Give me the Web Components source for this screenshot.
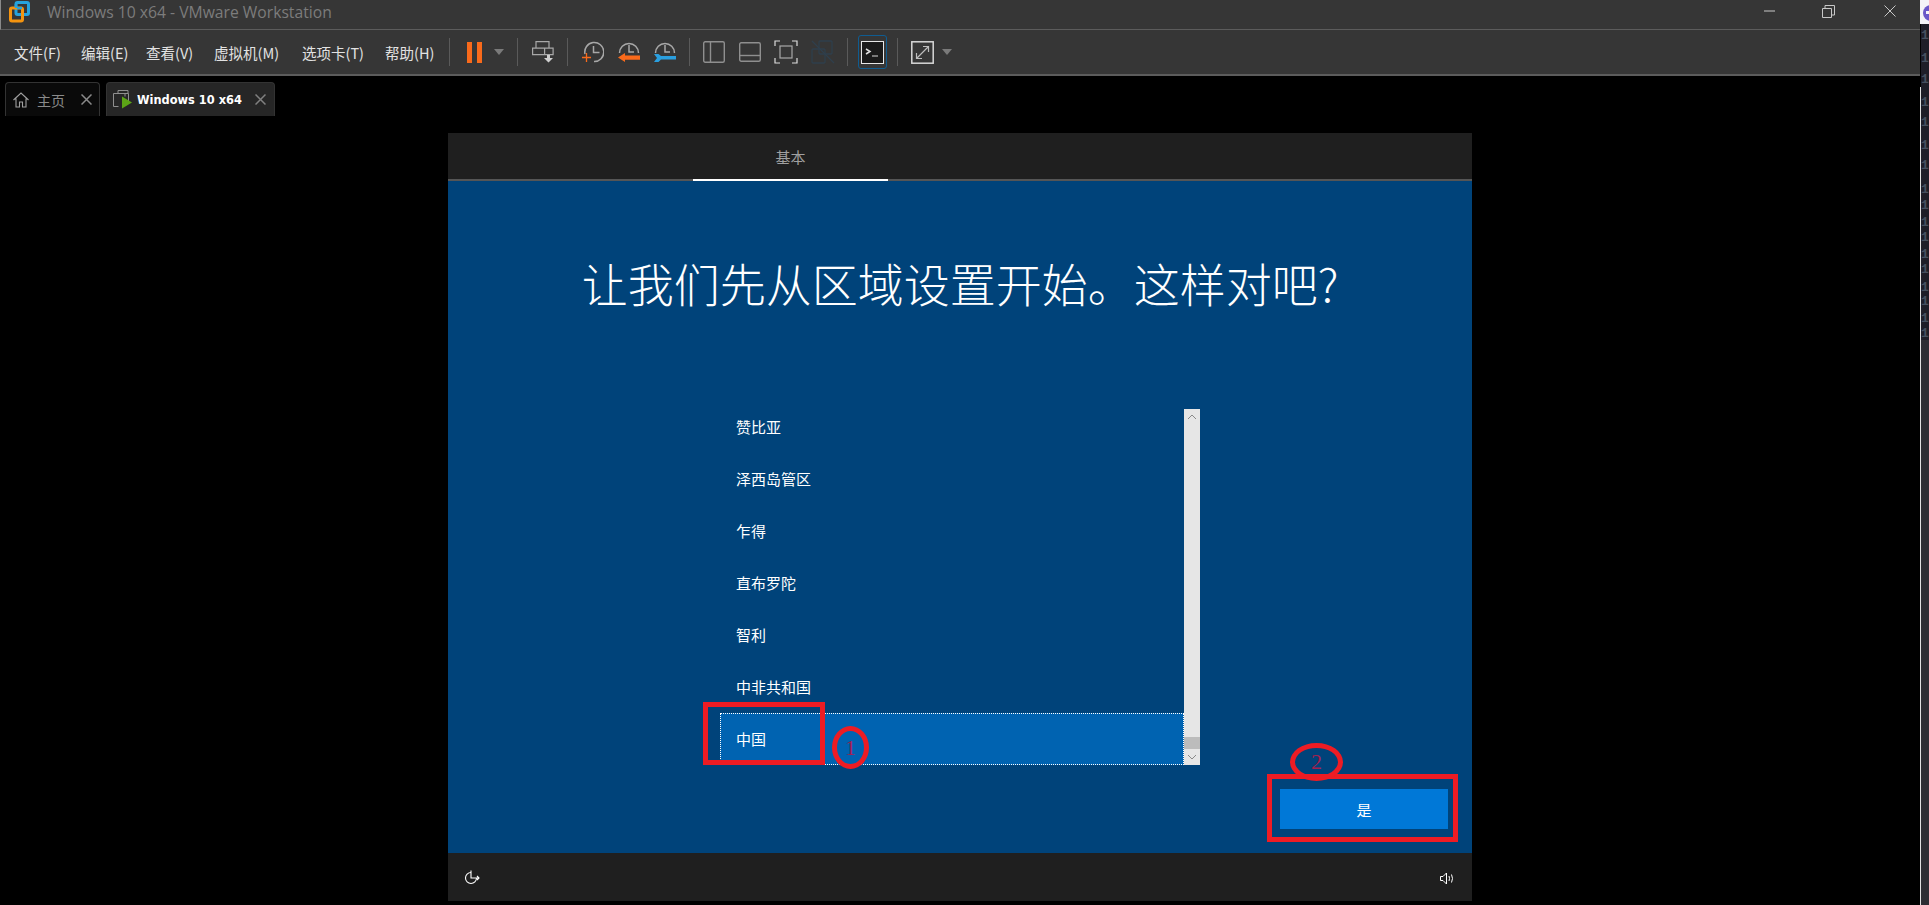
<!DOCTYPE html>
<html lang="zh"><head><meta charset="utf-8"><style>
html,body{margin:0;height:905px;overflow:hidden;background:#000}
body{display:flex;font-family:"Noto Sans CJK SC","Noto Sans",sans-serif}
vmw-app{flex:0 0 1920px}
side-strip{flex:0 0 9px}
</style></head><body>
<vmw-app></vmw-app><side-strip></side-strip>
<script>
const I={
pause:'<svg width="16" height="21" viewBox="0 0 16 21"><path fill="#f96a1b" d="M0 0h5v21H0zM10 0h5v21h-5z"/></svg>',
arrow:'<svg width="10" height="6" viewBox="0 0 10 6"><path fill="#7a7a7a" d="M0 0h10L5 6z"/></svg>',
send:'<svg width="22" height="24" viewBox="0 0 22 24" fill="none" stroke="#a8a8a8" stroke-width="1.2"><path d="M4 1.600h13v6.500H4zM.6 8.100h12v6.500H.6zM12.600 8.100h8.500v6.500h-8.500z"/><path fill="#cfcfcf" stroke="none" d="M15 15h3v3h3l-4.500 4.500-4.500-4.500h3z"/></svg>',
clock1:'<svg width="22" height="22" viewBox="0 0 22 22" fill="none"><path stroke="#a8a8a8" stroke-width="1.500" d="M3 13A9.500 9.500 0 1 1 12 20.500M11.500 5v6.500h6"/><path stroke="#f96a1b" stroke-width="1.300" d="M0 16.500h9M4.500 12v9"/></svg>',
clock2:'<svg width="22" height="22" viewBox="0 0 22 22" fill="none"><path stroke="#a8a8a8" stroke-width="1.500" d="M1.500 12A9.500 9.500 0 0 1 20.500 12M11 4v7h5"/><path fill="#f96a1b" d="M0 16.500L7 12v2.500h15v4.200H7V21z"/></svg>',
clock3:'<svg width="22" height="22" viewBox="0 0 22 22" fill="none"><path stroke="#a8a8a8" stroke-width="1.500" d="M1.500 12A9.500 9.500 0 0 1 20.500 12M11 4v7h5"/><path fill="#2a9fdf" d="M0 13h4.500l2.500 2h15v3.500H7l-2.500 2.500H0l3-4z"/></svg>',
left:'<svg width="22" height="22" viewBox="0 0 22 22" fill="none" stroke="#8f8f8f" stroke-width="1.400"><rect x=".7" y=".7" width="20.600" height="20.600" rx="1.500"/><path d="M7.500 1v20"/></svg>',
bottom:'<svg width="22" height="20" viewBox="0 0 22 20" fill="none" stroke="#8f8f8f" stroke-width="1.400"><rect x=".7" y=".7" width="20.600" height="18.600" rx="1.500"/><path d="M1 13.500h20"/></svg>',
full:'<svg width="24" height="24" viewBox="0 0 24 24" fill="none" stroke="#dcdcdc" stroke-width="1.200"><path d="M1 6V1h5M18 1h5v5M23 18v5h-5M6 23H1v-5"/><rect x="6" y="6" width="12" height="12" stroke="#a8a8a8"/></svg>',
unity:'<svg width="24" height="24" viewBox="0 0 24 24" fill="none" stroke="#2f3f4c" stroke-width="1.300"><rect x="8" y="1" width="13" height="13" rx="1"/><rect x="1" y="9" width="13" height="14" rx="1"/><path d="M1 1l22 22"/></svg>',
term:'<svg width="23" height="23" viewBox="0 0 23 23"><rect x=".5" y=".5" width="22" height="22" fill="#1a1a1a" stroke="#e6e6e6"/><path fill="none" stroke="#e0e0e0" stroke-width="1.500" d="M5 8l4 2.500L5 13"/><path stroke="#bbb" stroke-width="1.200" d="M11 15h6"/></svg>',
expand:'<svg width="23" height="23" viewBox="0 0 23 23" fill="none"><rect x=".8" y=".8" width="21.400" height="21.400" stroke="#d8d8d8" stroke-width="1.500"/><path stroke="#bdbdbd" stroke-width="1.200" d="M6 17L17 6M12 5.500h5.500V11M5.500 12v5.500H11"/></svg>',
home:'<svg width="16" height="16" viewBox="0 0 16 16" fill="none" stroke="#a0a0a0" stroke-width="1.100"><path d="M.5 8L8 1l7.500 7M3 6.500V15h3.500v-5h3v5H13V6.500"/></svg>',
vmtab:'<svg width="20" height="19" viewBox="0 0 20 19" fill="none" stroke="#8f8f8f" stroke-width="1"><path d="M5 3.500V.5h10v3M12 3.500h3.500V14M.5 3.500h11.500v3M.5 3.500v13h5"/><path fill="#5ca516" stroke="none" d="M9 6.500l10 6-10 6z"/></svg>',
x:c=>`<svg width="11" height="11" viewBox="0 0 11 11"><path stroke="${c}" stroke-width="1.500" d="M.5.500l10 10M10.500.500l-10 10"/></svg>`,
logo:'<svg width="21" height="22" viewBox="0 0 21 22" fill="none" stroke-width="3"><rect x="7" y="1.500" width="12.500" height="12" rx="1.500" stroke="#26a3dd"/><rect x="1.500" y="7" width="12" height="13" rx="1.500" stroke="#f5940f"/><path stroke="#26a3dd" stroke-width="2.500" d="M7 7v-4M8 7h5"/></svg>',
power:'<svg width="16" height="16" viewBox="0 0 16 16" fill="none" stroke="#fff" stroke-width="1.100"><path d="M7 2.500A5.500 5.500 0 1 0 12.500 8"/><path d="M7 .5V8h8M13 6l2 2-2 2"/></svg>',
sound:'<svg width="15" height="13" viewBox="0 0 15 13" fill="none" stroke="#fff" stroke-width="1"><path d="M.5 4.500h2.500L6.500 1v11L3 8.500H.5z"/><path d="M9 4q1 2.500 0 5M11.500 2.500q2 4 0 8"/></svg>'
};
function def(name,html,init){customElements.define(name,class extends HTMLElement{constructor(){super();const s=this.attachShadow({mode:'open'});s.innerHTML=html;if(init)init(s)}})}

def('vmw-titlebar',`<style>
:host{display:flex;align-items:center;height:29px;background:#363636;border-bottom:1px solid #5c5c5c;border-left:1px solid #8a8a8a;padding-left:8px}
.t{margin-left:17px;font:15.700px "Open Sans",sans-serif;color:#7c7c7c;flex:1;margin-top:-5px}
svg{display:block}.l{margin-top:-5px}
.w{display:flex;align-items:center;margin-top:-7px}
</style><span class="l">${I.logo}</span><span class="t">Windows 10 x64 - VMware Workstation</span>
<span class="w">
<svg style="margin-right:47px" width="11" height="2"><path stroke="#c8c8c8" d="M0 1h11"/></svg>
<svg style="margin-right:49px" width="13" height="13" viewBox="0 0 13 13" fill="none" stroke="#c8c8c8"><path d="M.5 3.500h9v9h-9zM3 3.500V.5h9.500V10H9.500"/></svg>
<svg style="margin-right:24px" width="12" height="12"><path stroke="#c8c8c8" d="M.5.500l11 11M11.500.500l-11 11"/></svg>
</span>`);

def('vmw-menu-item',`<style>:host{display:block;flex:none;font-size:14.500px;color:#e2e2e2;white-space:nowrap}</style><slot></slot>`);
def('vmw-sep',`<style>:host{display:block;flex:none;width:1px;height:28px;background:#5a5a5a}</style>`);

def('vmw-toolbar',`<style>
:host{display:flex;align-items:center;height:44px;background:#363636;border-bottom:2px solid #5c5c5c;padding-left:14px}
svg{display:block}
.b{flex:none;display:flex;align-items:center;justify-content:center}
.hl{box-sizing:border-box;width:29px;height:34px;border:1px solid #0f5c91;border-radius:3px}
</style>
<vmw-menu-item style="width:67px">文件(F)</vmw-menu-item>
<vmw-menu-item style="width:65px">编辑(E)</vmw-menu-item>
<vmw-menu-item style="width:68px">查看(V)</vmw-menu-item>
<vmw-menu-item style="width:88px">虚拟机(M)</vmw-menu-item>
<vmw-menu-item style="width:83px">选项卡(T)</vmw-menu-item>
<vmw-menu-item style="width:64px">帮助(H)</vmw-menu-item>
<vmw-sep></vmw-sep>
<span class="b" style="margin-left:17px">${I.pause}</span>
<span class="b" style="margin-left:11px">${I.arrow}</span>
<vmw-sep style="margin-left:13px"></vmw-sep>
<span class="b" style="margin-left:14px">${I.send}</span>
<vmw-sep style="margin-left:13px"></vmw-sep>
<span class="b" style="margin-left:14px">${I.clock1}</span>
<span class="b" style="margin-left:14px">${I.clock2}</span>
<span class="b" style="margin-left:14px">${I.clock3}</span>
<vmw-sep style="margin-left:13px"></vmw-sep>
<span class="b" style="margin-left:13px">${I.left}</span>
<span class="b" style="margin-left:14px">${I.bottom}</span>
<span class="b" style="margin-left:13px">${I.full}</span>
<span class="b" style="margin-left:13px">${I.unity}</span>
<vmw-sep style="margin-left:12px"></vmw-sep>
<span class="b hl" style="margin-left:10px">${I.term}</span>
<vmw-sep style="margin-left:10px"></vmw-sep>
<span class="b" style="margin-left:13px">${I.expand}</span>
<span class="b" style="margin-left:8px">${I.arrow}</span>`);

def('vmw-tabs',`<style>
:host{display:flex;align-items:flex-end;gap:6px;height:40px;padding-left:5px;background:#000}
.tab{box-sizing:border-box;height:34px;display:flex;align-items:center;border:1px solid #333;border-bottom:0;border-radius:4px 4px 0 0}
.a{width:95px;background:#0a0a0a;color:#8a8a8a;font-size:14px;padding-left:7px}
.a span{margin-left:8px;width:44px}
.b{width:169px;background:#262626;color:#fff;font:bold 11.400px "DejaVu Sans",sans-serif;padding-left:6px}
.b span{margin-left:4px;width:118px}
svg{display:block;flex:none}
</style><div class="tab a">${I.home}<span>主页</span>${I.x('#8a8a8a')}</div>
<div class="tab b">${I.vmtab}<span>Windows 10 x64</span>${I.x('#808080')}</div>`);

def('oobe-row',`<style>
:host{display:flex;align-items:center;box-sizing:border-box;height:52px;padding:0 0 2px 16px;font-size:15px;color:#fff;flex:none}
:host([selected]){background:#0063b1;outline:1px dotted #fff;outline-offset:-1px}
</style><slot></slot>`);

def('oobe-list',`<style>
:host{display:flex;width:480px;height:356px;overflow:hidden}
.items{width:464px;height:356px;overflow:hidden;display:flex;flex-direction:column}
::slotted(:first-child){margin-top:-8px}
.bar{width:16px;background:#e6e6e6;display:flex;flex-direction:column}
.sp{flex:1}
.th{height:12px;background:#bcbcbc}
.ar{height:16px;display:flex;align-items:center;justify-content:center}
</style><div class="items"><slot></slot></div>
<div class="bar"><div class="ar"><svg width="10" height="6"><path fill="none" stroke="#8a8a8a" d="M1 5l4-4 4 4"/></svg></div><div class="sp"></div><div class="th"></div><div class="ar"><svg width="10" height="6"><path fill="none" stroke="#8a8a8a" d="M1 1l4 4 4-4"/></svg></div></div>`);

def('oobe-note',`<style>
:host{position:absolute;display:flex;align-items:center;justify-content:center;box-sizing:border-box;border:5px solid #ed1c24;color:#a3204f;font:22px "Liberation Serif",serif}
</style><slot></slot>`);

def('oobe-screen',`<style>
:host{display:flex;flex-direction:column;position:relative;width:1024px;height:768px;background:#00437a;color:#fff}
.top{height:46px;background:#1f1f1f;display:flex;border-bottom:2px solid #555;flex:none}
.tab{width:195px;margin-left:245px;margin-bottom:-2px;border-bottom:2px solid #fff;display:flex;align-items:center;justify-content:center;font-size:15px;color:#a0a0a0}
h1{margin:68px 0 0;height:66px;line-height:66px;font-size:46px;font-weight:300;text-align:center}
.mid{flex:1;position:relative}
oobe-list{margin:94px 0 0 272px}
.btn{position:absolute;left:832px;top:656px;width:168px;height:40px;background:#0078d7;display:flex;align-items:center;justify-content:center;font-size:15px}
.bot{height:48px;box-sizing:border-box;background:#1f1f1f;display:flex;align-items:center;justify-content:space-between;padding:2px 17px 0 16px;flex:none}
svg{display:block}
</style>
<div class="top"><div class="tab">基本</div></div>
<h1>让我们先从区域设置开始。这样对吧?</h1>
<div class="mid"><oobe-list>
<oobe-row>赞比亚</oobe-row><oobe-row>泽西岛管区</oobe-row><oobe-row>乍得</oobe-row><oobe-row>直布罗陀</oobe-row><oobe-row>智利</oobe-row><oobe-row>中非共和国</oobe-row><oobe-row selected>中国</oobe-row>
</oobe-list></div>
<div class="btn">是</div>
<div class="bot">${I.power}${I.sound}</div>
<oobe-note style="left:255px;top:569px;width:122px;height:63px"></oobe-note>
<oobe-note style="left:384px;top:593px;width:37px;height:43px;border-radius:50%">1</oobe-note>
<oobe-note style="left:819px;top:641px;width:191px;height:68px"></oobe-note>
<oobe-note style="left:842px;top:610px;width:53px;height:38px;border-radius:50%">2</oobe-note>`);

def('vmw-app',`<style>
:host{display:block;height:905px;background:#000;overflow:hidden}
.wrap{display:flex;justify-content:center;width:1920px;padding-top:17px}
</style><vmw-titlebar></vmw-titlebar><vmw-toolbar></vmw-toolbar><vmw-tabs></vmw-tabs>
<div class="wrap"><oobe-screen></oobe-screen></div>`);

def('side-strip',`<style>
:host{display:flex;flex-direction:column;height:905px;background:#2d2d33;overflow:hidden;position:relative}
.top{height:24px;background:#f4f4f8;flex:none;overflow:hidden;position:relative}
.top i{position:absolute;left:3px;top:5px;width:16px;height:16px;border-radius:50%;background:#6a58c8}
.top b{position:absolute;left:6px;top:11px;width:4px;height:3px;background:#f4f4f8}
.n{background:#1e1e28;height:316px;flex:none;font:bold 13px "Liberation Mono",monospace;color:#46505f;padding-left:1px;box-sizing:border-box}
.line{position:absolute;left:0;top:87px;bottom:0;width:1px;background:#e0e0e0}
.k{position:absolute;left:0;top:24px;height:63px;width:1px;background:#000}
</style><div class="top"><i></i><b></b></div><div class="n"></div><div class="k"></div><div class="line"></div>`,s=>{
  const ys=[33,58,77,102,121,145,163,189,204,222,236,254,268,287,300,318,333];
  const n=s.querySelector('.n');let prev=24;
  ys.forEach((y,i)=>{const next=i<ys.length-1?ys[i+1]:y+8;const bottom=Math.round((y+next)/2);
    const d=document.createElement('div');d.textContent='1';
    d.style.cssText='height:'+(bottom-prev)+'px;display:flex;align-items:center';
    d.style.paddingTop=Math.max(0,2*(y-prev)-(bottom-prev))+'px';d.style.boxSizing='border-box';
    n.appendChild(d);prev=bottom});
});
</script></body></html>
